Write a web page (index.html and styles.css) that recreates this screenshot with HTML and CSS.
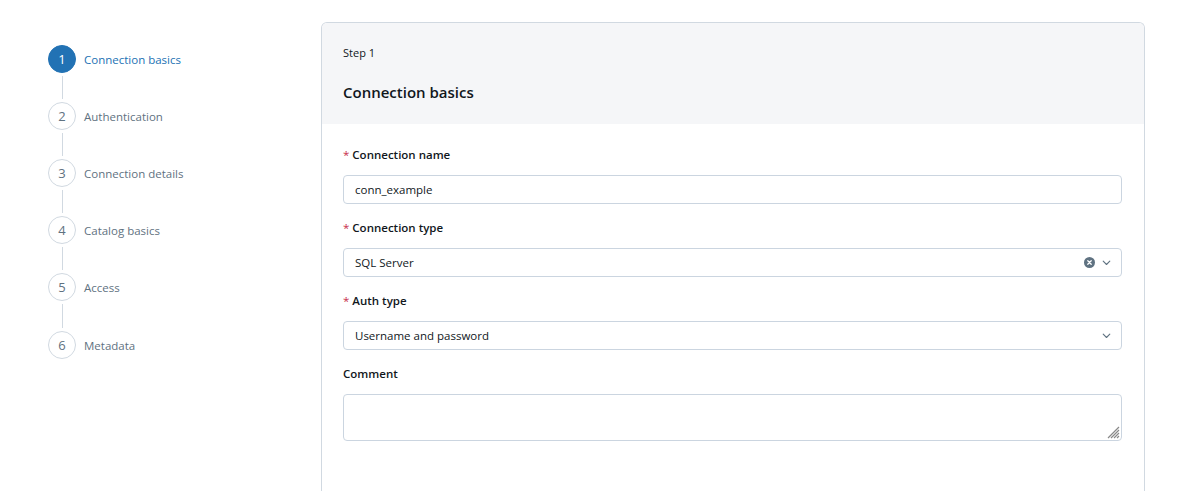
FILE: index.html
```html
<!DOCTYPE html>
<html>
<head>
<meta charset="utf-8">
<link rel="stylesheet" href="styles.css">
</head>
<body>
<div class="page">
  <nav class="steps">
    <div class="step active"><span class="num">1</span><span class="name">Connection basics</span></div>
    <div class="connector"></div>
    <div class="step"><span class="num">2</span><span class="name">Authentication</span></div>
    <div class="connector"></div>
    <div class="step"><span class="num">3</span><span class="name">Connection details</span></div>
    <div class="connector"></div>
    <div class="step"><span class="num">4</span><span class="name">Catalog basics</span></div>
    <div class="connector"></div>
    <div class="step"><span class="num">5</span><span class="name">Access</span></div>
    <div class="connector last"></div>
    <div class="step"><span class="num">6</span><span class="name">Metadata</span></div>
  </nav>
  <main class="card">
    <header class="card-head">
      <div class="step-label">Step 1</div>
      <h1 class="title">Connection basics</h1>
    </header>
    <div class="card-body">
      <div class="field">
        <label class="label"><span class="req">*</span> Connection name</label>
        <div class="input">conn_example</div>
      </div>
      <div class="field">
        <label class="label"><span class="req">*</span> Connection type</label>
        <div class="input select">
          <span>SQL Server</span>
          <span class="icons">
            <svg class="clear" width="11" height="11" viewBox="0 0 11 11"><circle cx="5.5" cy="5.5" r="5.5" fill="#5f7281"/><path d="M3.8 3.8 L7.2 7.2 M7.2 3.8 L3.8 7.2" stroke="#fff" stroke-width="1.3" stroke-linecap="round"/></svg>
            <svg class="chev" width="9" height="6" viewBox="0 0 9 6"><path d="M1.2 1.2 L4.5 4.5 L7.8 1.2" fill="none" stroke="#5f7281" stroke-width="1.1" stroke-linecap="round" stroke-linejoin="round"/></svg>
          </span>
        </div>
      </div>
      <div class="field">
        <label class="label"><span class="req">*</span> Auth type</label>
        <div class="input select">
          <span>Username and password</span>
          <span class="icons">
            <svg class="chev" width="9" height="6" viewBox="0 0 9 6"><path d="M1.2 1.2 L4.5 4.5 L7.8 1.2" fill="none" stroke="#5f7281" stroke-width="1.1" stroke-linecap="round" stroke-linejoin="round"/></svg>
          </span>
        </div>
      </div>
      <div class="field">
        <label class="label">Comment</label>
        <textarea class="textarea"></textarea>
      </div>
    </div>
  </main>
</div>
</body>
</html>
```
FILE: styles.css
```css
* { box-sizing: border-box; }
html, body { margin: 0; background: #fff; }
body {
  font-family: "Open Sans", "Noto Sans", sans-serif;
  font-size: 12px;
  color: #11171c;
  overflow: hidden;
  height: 491px;
}
.page {
  display: flex;
  padding: 22px 48px 0 48px;
}
.steps {
  width: 273px;
  flex: none;
  display: flex;
  flex-direction: column;
  padding-top: 23px;
}
.step {
  display: flex;
  align-items: center;
  gap: 8px;
  height: 28px;
}
.num {
  width: 28px;
  height: 28px;
  border-radius: 50%;
  border: 1px solid #d1d9e1;
  display: flex;
  align-items: center;
  justify-content: center;
  color: #5f7281;
  font-size: 13px;
}
.name {
  color: #5f7281;
  font-size: 11.5px;
}
.step.active .num {
  background: #2272b4;
  border-color: #2272b4;
  color: #fff;
}
.step.active .name { color: #2272b4; }
.connector {
  width: 28px;
  height: 29px;
  display: flex;
  justify-content: center;
  padding: 3px 0;
}
.connector.last { height: 30px; }
.connector::before {
  content: "";
  width: 1px;
  background: #d1d9e1;
}
.card {
  flex: 1;
  border: 1px solid #d1d9e1;
  border-bottom: none;
  border-radius: 6px 6px 0 0;
  height: 469px;
  overflow: hidden;
}
.card-head {
  background: #f5f6f8;
  padding: 22px 21px 0;
  height: 101px;
}
.step-label {
  font-size: 11px;
  line-height: 16px;
}
.title {
  margin: 21px 0 0;
  font-size: 15px;
  line-height: 20px;
  font-weight: 600;
}
.card-body {
  padding: 23px 22px 0 21px;
  display: flex;
  flex-direction: column;
  gap: 16px;
}
.field {
  display: flex;
  flex-direction: column;
  gap: 12px;
}
.label {
  font-weight: 600;
  line-height: 16px;
  font-size: 11.5px;
}
.req { color: #c82d4c; font-weight: 400; }
.input {
  height: 29px;
  border: 1px solid #cbd5e0;
  border-radius: 4px;
  padding: 0 11px;
  display: flex;
  align-items: center;
  font-size: 11.5px;
}
.select { justify-content: space-between; padding-right: 10px; }
.icons { display: flex; align-items: center; gap: 7px; }
.textarea {
  height: 47px;
  border: 1px solid #cbd5e0;
  border-radius: 4px;
  resize: none;
  font-family: inherit;
  outline: none;
  background-image: url("data:image/svg+xml,%3Csvg xmlns='http://www.w3.org/2000/svg' width='14' height='14'%3E%3Cpath d='M13 2 L2 13 M13 5 L5 13 M13 8 L8 13 M13 11 L11 13' stroke='%23888' stroke-width='1.2'/%3E%3C/svg%3E");
  background-repeat: no-repeat;
  background-position: right 1px bottom 1px;
}
```
